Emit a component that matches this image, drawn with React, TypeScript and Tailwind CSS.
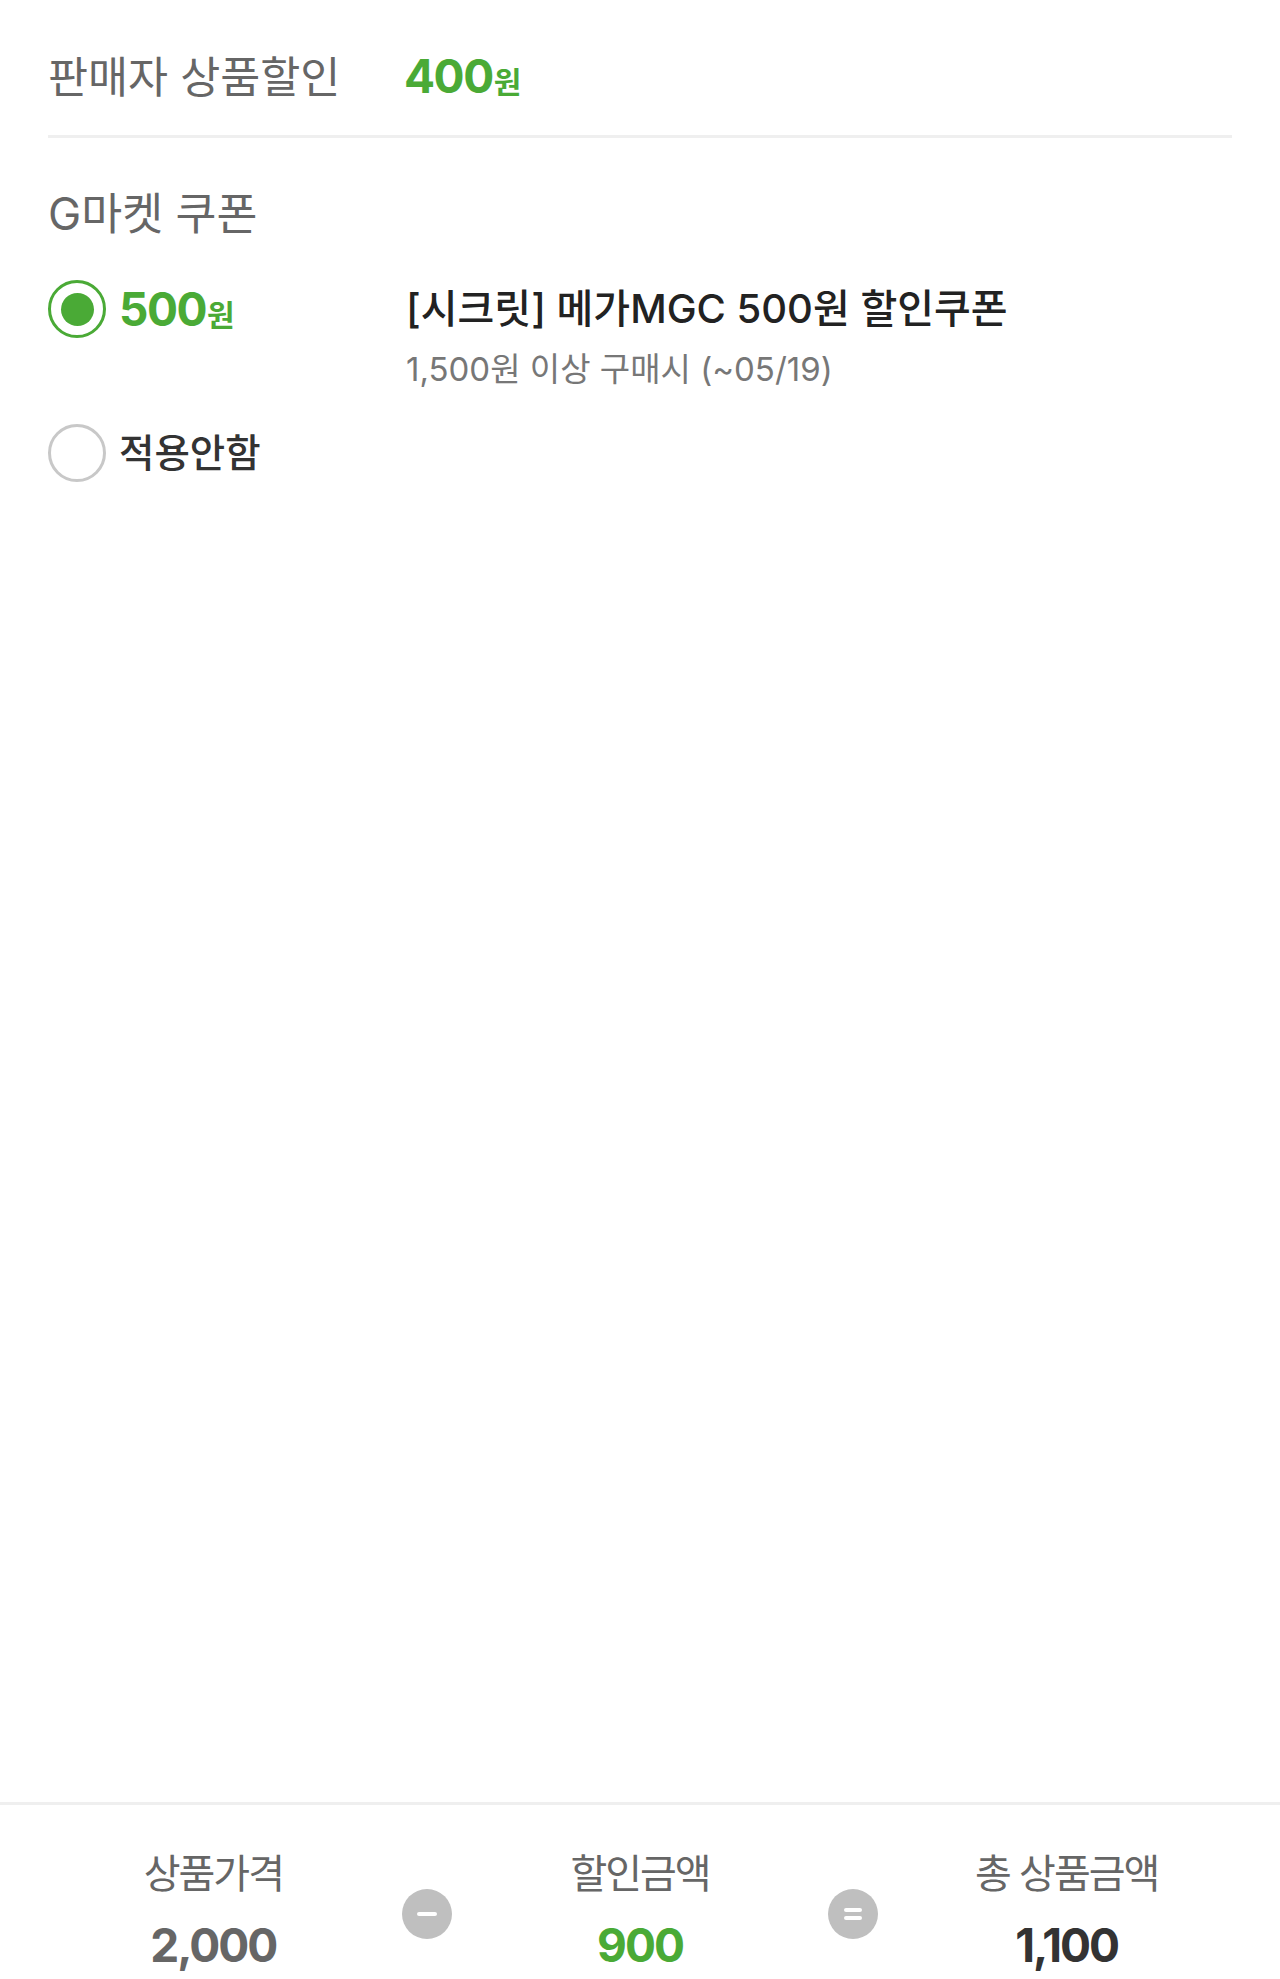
import React from "react";

const font = "font-['Inter','Noto_Sans_CJK_KR',sans-serif]";

function Radio({ checked }: { checked: boolean }) {
    return (
        <span
            className={
                checked
                    ? "flex h-[58px] w-[58px] shrink-0 items-center justify-center rounded-full border-[3px] border-[#4aaa36]"
                    : "flex h-[58px] w-[58px] shrink-0 items-center justify-center rounded-full border-[3px] border-[#c8c8c8]"
            }
        >
            {checked && <span className="h-[33px] w-[33px] rounded-full bg-[#4aaa36]" />}
        </span>
    );
}

function Operator({ sign }: { sign: "-" | "=" }) {
    return (
        <div className="flex w-0 justify-center">
            <div className="flex h-[50px] w-[50px] shrink-0 flex-col items-center justify-center gap-[4px] rounded-full bg-[#bfbfbf]">
                {sign === "-" ? (
                    <span className="h-[4px] w-[20px] rounded-full bg-white" />
                ) : (
                    <>
                        <span className="h-[4px] w-[18px] rounded-full bg-white" />
                        <span className="h-[4px] w-[18px] rounded-full bg-white" />
                    </>
                )}
            </div>
        </div>
    );
}

function Summary({ label, value, tone }: { label: string; value: string; tone: string }) {
    return (
        <div className="flex flex-1 flex-col items-center">
            <p className="text-[40px] leading-[48px] tracking-[-2px] text-[#666]">{label}</p>
            <p className={`mt-[19px] text-[46px] font-bold leading-[56px] tracking-[-2px] ${tone}`}>{value}</p>
        </div>
    );
}

export default function App() {
    return (
        <main className={`flex min-h-[1979px] flex-col bg-white ${font}`}>
            <section className="px-[48px] pt-[48px]">
                <div className="flex items-center">
                    <p className="w-[356px] text-[43.5px] leading-[56px] text-[#666]">판매자 상품할인</p>
                    <p className="flex items-baseline text-[#4aaa36] font-bold">
                        <span className="text-[46px] leading-[56px] tracking-[-1.5px]">400</span>
                        <span className="ml-[1px] text-[30px]">원</span>
                    </p>
                </div>
                <div className="mt-[30px] h-[3px] bg-[#efefef]" />

                <p className="mt-[48px] text-[44.5px] leading-[56px] text-[#666]">G마켓 쿠폰</p>

                <div className="mt-[38px] flex items-start">
                    <div className="flex w-[358px] items-center gap-[13px]">
                        <Radio checked />
                        <p className="flex items-baseline font-bold text-[#4aaa36]">
                            <span className="text-[46px] leading-[58px] tracking-[-1.5px]">500</span>
                            <span className="ml-[1px] text-[30px]">원</span>
                        </p>
                    </div>
                    <div className="flex flex-col">
                        <p className="text-[40px] font-medium leading-[58px] text-[#222]">[시크릿] 메가MGC 500원 할인쿠폰</p>
                        <p className="mt-[11px] text-[33px] leading-[40px] text-[#777]">1,500원 이상 구매시 (~05/19)</p>
                    </div>
                </div>

                <div className="mt-[35px] flex items-center gap-[13px]">
                    <Radio checked={false} />
                    <p className="text-[38.5px] font-medium leading-[58px] text-[#333]">적용안함</p>
                </div>
            </section>

            <footer className="mt-auto h-[177px] border-t-[3px] border-[#efefef] pt-[45px]">
                <div className="flex items-start">
                    <Summary label="상품가격" value="2,000" tone="text-[#666]" />
                    <div className="mt-[39px] flex">
                        <Operator sign="-" />
                    </div>
                    <Summary label="할인금액" value="900" tone="text-[#4aaa36]" />
                    <div className="mt-[39px] flex">
                        <Operator sign="=" />
                    </div>
                    <Summary label="총 상품금액" value="1,100" tone="text-[#333]" />
                </div>
            </footer>
        </main>
    );
}
